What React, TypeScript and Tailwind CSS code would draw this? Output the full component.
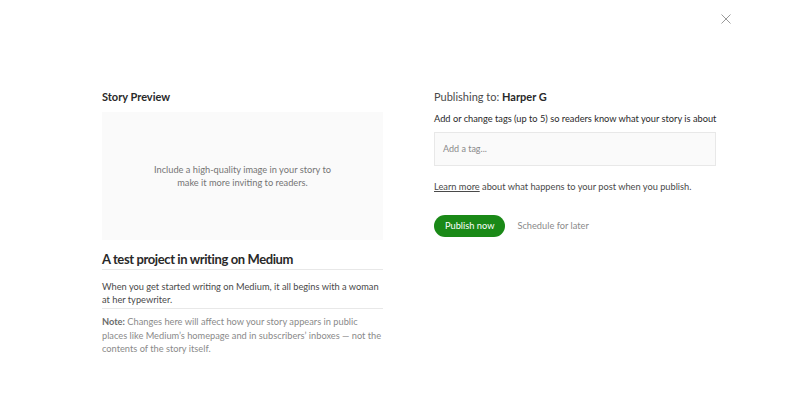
export default function App() {
  return (
    <div
      className="relative w-[800px] h-[399px] bg-white text-[#292929]"
      style={{ fontFamily: 'Lato, "Noto Sans", sans-serif' }}
    >
      {/* 閉じるボタン */}
      <button aria-label="Close" className="absolute left-[720px] top-[13px] p-[1px] text-[#9a9a9a]">
        <svg width="10" height="10" viewBox="0 0 10 10" fill="none" aria-hidden="true">
          <line x1="0.5" y1="0.5" x2="9.5" y2="9.5" stroke="currentColor" strokeWidth="1" />
          <line x1="9.5" y1="0.5" x2="0.5" y2="9.5" stroke="currentColor" strokeWidth="1" />
        </svg>
      </button>

      <div className="flex pl-[102px] pt-[88px] gap-[51px]">
        {/* 左カラム */}
        <div className="w-[281px] flex flex-col">
          <h2 className="text-[11px] font-bold leading-[18px]">Story Preview</h2>
          <div className="mt-[6px] h-[128px] bg-[#fafafa] flex items-center justify-center">
            <p className="text-[9.25px] leading-[13px] text-[#757575] text-center w-[200px]">
              Include a high-quality image in your story to make it more inviting to readers.
            </p>
          </div>
          <div className="mt-[11px] pb-[2px] border-b border-[#e8e8e8]">
            <h3 className="text-[13px] font-bold leading-[16px] tracking-[-0.03em]">
              A test project in writing on Medium
            </h3>
          </div>
          <div className="pt-[10px] pb-[2px] border-b border-[#e8e8e8]">
            <p className="text-[9.25px] leading-[13px] text-[#4a4a4a]">
              When you get started writing on Medium, it all begins with a woman at her typewriter.
            </p>
          </div>
          <p className="pt-[6px] text-[9.25px] leading-[13.5px] text-[#8a8a8a]">
            <span className="font-bold text-[#6b6b6b]">Note:</span> Changes here will affect how your story appears in
            public places like Medium’s homepage and in subscribers’ inboxes — not the contents of the story itself.
          </p>
        </div>

        {/* 右カラム */}
        <div className="w-[282px] flex flex-col">
          <h2 className="text-[11px] leading-[18px] text-[#4a4a4a]">
            Publishing to: <span className="font-bold text-[#292929]">Harper G</span>
          </h2>
          <p className="mt-[7px] text-[9.25px] leading-[12px] text-[#292929] whitespace-nowrap">
            Add or change tags (up to 5) so readers know what your story is about
          </p>
          <div className="mt-[7px] h-[34px] bg-[#fafafa] border border-[#e8e8e8] flex items-center px-[8px]">
            <span className="text-[9px] text-[#8a8a8a]">Add a tag...</span>
          </div>
          <p className="mt-[14px] text-[9.25px] leading-[14px] text-[#4a4a4a]">
            <a href="#" className="underline">Learn more</a> about what happens to your post when you publish.
          </p>
          <div className="mt-[21px] flex items-center gap-[12px]">
            <button className="h-[22px] px-[11px] rounded-full bg-[#1a8917] text-white text-[9.25px]">
              Publish now
            </button>
            <button className="text-[9.25px] text-[#8a8a8a]">Schedule for later</button>
          </div>
        </div>
      </div>
    </div>
  );
}
